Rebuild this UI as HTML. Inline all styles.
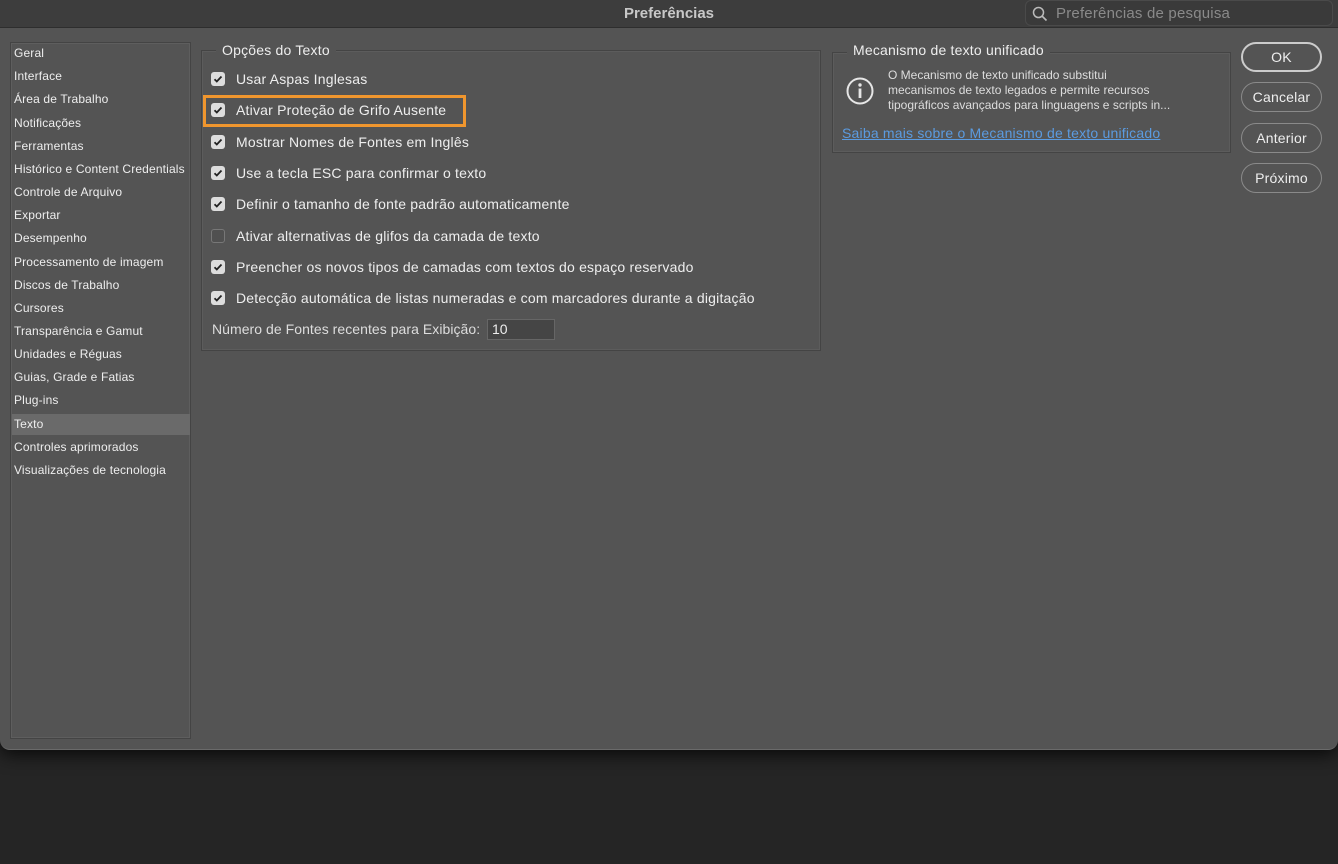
<!DOCTYPE html>
<html><head><meta charset="utf-8"><style>
*{margin:0;padding:0;box-sizing:border-box}
body{width:1338px;height:864px;background:#252525;font-family:"Liberation Sans",Arial,sans-serif;position:relative;overflow:hidden;color:#e6e6e6}
#win{position:absolute;left:0;top:0;width:1338px;height:750px;background:#545454;border-radius:0 0 10px 10px;box-shadow:0 4px 18px rgba(0,0,0,.8);border-bottom:1px solid #6a6a6a}
#title{position:absolute;left:0;top:0;width:1338px;height:28px;background:#3d3d3d;border-bottom:1px solid #2e2e2e}
#title .t{position:absolute;left:0;width:1338px;text-align:center;top:5px;font-size:15px;font-weight:bold;color:#c8c8c8}
#search{position:absolute;left:1025px;top:0;width:308px;height:26px;border:1px solid #4a4a4a;border-radius:6px;background:#3a3a3a}
#search span{position:absolute;left:30px;top:4px;font-size:15px;color:#8a8a8a;letter-spacing:0.2px}
#side{position:absolute;left:10px;top:42px;width:181px;height:697px;border:1px solid #444;background:#545454;box-shadow:inset 0 0 0 1px #5e5e5e}
.it{position:absolute;left:3px;font-size:12px;color:#eee;height:21px;line-height:21px;letter-spacing:0.15px}
.sel{left:1px;width:178px;background:#6a6a6a;padding-left:2px}
.box{position:absolute;border:1px solid #444;box-shadow:inset 0 0 0 1px #5c5c5c}
.leg{position:absolute;background:#545454;padding:0 6px;font-size:14px;color:#eee;letter-spacing:0.2px}
.row{position:absolute;left:211px;font-size:14px;color:#eee;height:16px;line-height:16px;letter-spacing:0.2px}
.cb{position:absolute;left:0;top:1px;width:14px;height:14px;border-radius:3px;background:#ddd}
.cb.off{background:#505050;border:1px solid #777}
.cb svg{position:absolute;left:2px;top:2px}
.row span{position:absolute;left:25px;white-space:nowrap}
.btn{position:absolute;left:1241px;width:81px;height:30px;border:1px solid #8a8a8a;border-radius:15px;text-align:center;line-height:28px;font-size:14px;color:#eee;letter-spacing:0.2px}
</style></head><body>
<div id="win">
<div id="title"><div class="t">Preferências</div>
<div id="search"><svg style="position:absolute;left:6px;top:5px" width="16" height="16" viewBox="0 0 16 16"><circle cx="6.5" cy="6.5" r="5" fill="none" stroke="#bbb" stroke-width="1.5"/><path d="M10 10l4.5 4.5" stroke="#bbb" stroke-width="1.6"/></svg><span>Preferências de pesquisa</span></div></div>
<div id="side">
<div class="it" style="top:0">Geral</div>
<div class="it" style="top:23px">Interface</div>
<div class="it" style="top:46px">Área de Trabalho</div>
<div class="it" style="top:70px">Notificações</div>
<div class="it" style="top:93px">Ferramentas</div>
<div class="it" style="top:116px">Histórico e Content Credentials</div>
<div class="it" style="top:139px">Controle de Arquivo</div>
<div class="it" style="top:162px">Exportar</div>
<div class="it" style="top:185px">Desempenho</div>
<div class="it" style="top:209px">Processamento de imagem</div>
<div class="it" style="top:232px">Discos de Trabalho</div>
<div class="it" style="top:255px">Cursores</div>
<div class="it" style="top:278px">Transparência e Gamut</div>
<div class="it" style="top:301px">Unidades e Réguas</div>
<div class="it" style="top:324px">Guias, Grade e Fatias</div>
<div class="it" style="top:347px">Plug-ins</div>
<div class="it sel" style="top:371px">Texto</div>
<div class="it" style="top:394px">Controles aprimorados</div>
<div class="it" style="top:417px">Visualizações de tecnologia</div>
</div>
<div class="box" style="left:201px;top:50px;width:620px;height:301px"></div>
<div class="leg" style="left:216px;top:42px">Opções do Texto</div>
<div style="position:absolute;left:203px;top:95px;width:263px;height:32px;border:3px solid #f0962e"></div>
<div class="row" style="top:71px"><div class="cb"><svg width="10" height="10" viewBox="0 0 10 10"><path d="M1.5 5.2l2.3 2.3L8.5 2.5" fill="none" stroke="#222" stroke-width="1.8"/></svg></div><span>Usar Aspas Inglesas</span></div>
<div class="row" style="top:102px"><div class="cb"><svg width="10" height="10" viewBox="0 0 10 10"><path d="M1.5 5.2l2.3 2.3L8.5 2.5" fill="none" stroke="#222" stroke-width="1.8"/></svg></div><span>Ativar Proteção de Grifo Ausente</span></div>
<div class="row" style="top:134px"><div class="cb"><svg width="10" height="10" viewBox="0 0 10 10"><path d="M1.5 5.2l2.3 2.3L8.5 2.5" fill="none" stroke="#222" stroke-width="1.8"/></svg></div><span>Mostrar Nomes de Fontes em Inglês</span></div>
<div class="row" style="top:165px"><div class="cb"><svg width="10" height="10" viewBox="0 0 10 10"><path d="M1.5 5.2l2.3 2.3L8.5 2.5" fill="none" stroke="#222" stroke-width="1.8"/></svg></div><span>Use a tecla ESC para confirmar o texto</span></div>
<div class="row" style="top:196px"><div class="cb"><svg width="10" height="10" viewBox="0 0 10 10"><path d="M1.5 5.2l2.3 2.3L8.5 2.5" fill="none" stroke="#222" stroke-width="1.8"/></svg></div><span>Definir o tamanho de fonte padrão automaticamente</span></div>
<div class="row" style="top:228px"><div class="cb off"></div><span>Ativar alternativas de glifos da camada de texto</span></div>
<div class="row" style="top:259px"><div class="cb"><svg width="10" height="10" viewBox="0 0 10 10"><path d="M1.5 5.2l2.3 2.3L8.5 2.5" fill="none" stroke="#222" stroke-width="1.8"/></svg></div><span>Preencher os novos tipos de camadas com textos do espaço reservado</span></div>
<div class="row" style="top:290px"><div class="cb"><svg width="10" height="10" viewBox="0 0 10 10"><path d="M1.5 5.2l2.3 2.3L8.5 2.5" fill="none" stroke="#222" stroke-width="1.8"/></svg></div><span>Detecção automática de listas numeradas e com marcadores durante a digitação</span></div>
<div style="position:absolute;left:212px;top:321px;font-size:14px;color:#ddd;letter-spacing:0.05px">Número de Fontes recentes para Exibição:</div>
<div style="position:absolute;left:487px;top:319px;width:68px;height:21px;background:#454545;border:1px solid #666;font-size:14px;line-height:19px;padding-left:4px;color:#eee">10</div>
<div class="box" style="left:832px;top:52px;width:399px;height:101px"></div>
<div class="leg" style="left:847px;top:42px">Mecanismo de texto unificado</div>
<svg style="position:absolute;left:845px;top:76px" width="30" height="30" viewBox="0 0 30 30"><circle cx="15" cy="15" r="12.5" fill="none" stroke="#e6e6e6" stroke-width="2"/><circle cx="15" cy="9" r="1.7" fill="#e6e6e6"/><rect x="13.6" y="12.5" width="2.8" height="9.5" fill="#e6e6e6"/></svg>
<div style="position:absolute;left:888px;top:68px;font-size:12px;line-height:15px;color:#ddd">O Mecanismo de texto unificado substitui<br>mecanismos de texto legados e permite recursos<br>tipográficos avançados para linguagens e scripts in...</div>
<div style="position:absolute;left:842px;top:125px;font-size:14px;color:#5b9be0;text-decoration:underline;letter-spacing:0.2px">Saiba mais sobre o Mecanismo de texto unificado</div>
<div class="btn" style="top:42px;border:2px solid #ccc;line-height:26px">OK</div>
<div class="btn" style="top:82px">Cancelar</div>
<div class="btn" style="top:123px">Anterior</div>
<div class="btn" style="top:163px">Próximo</div>
</div>
</body></html>
